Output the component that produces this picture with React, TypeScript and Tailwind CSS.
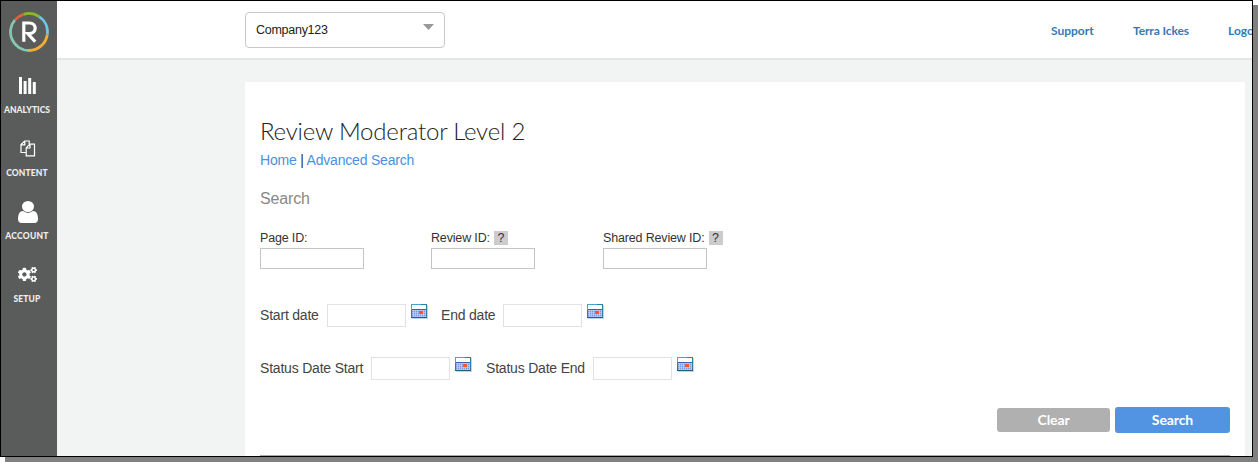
import type { ReactNode } from "react";
import { FaCogs } from "react-icons/fa";

function Logo() {
  return (
    <svg width="40" height="40" viewBox="0 0 40 40" fill="none" strokeWidth="2.8">
      <path d="M20 38.5A18.5 18.5 0 0 1 6 7.9" stroke="#86c7b0" />
      <path d="M6 7.9A18.5 18.5 0 0 1 14.6 2.3" stroke="#e2603b" />
      <path d="M14.6 2.3A18.5 18.5 0 0 1 30.2 4.6" stroke="#8cb82b" />
      <path d="M30.2 4.6A18.5 18.5 0 0 1 38.3 22.5" stroke="#72c5ea" />
      <path d="M38.3 22.5A18.5 18.5 0 0 1 20 38.5" stroke="#f0ae35" />
      <path d="M14.8 29.8V11H20.3C28.1 11 28.1 21.6 20.3 21.6H18.8L26.2 29.8" stroke="#fff" strokeWidth="3.2" />
    </svg>
  );
}

function BarsIcon() {
  return (
    <svg width="18" height="18" viewBox="0 0 18 18" fill="#fff">
      <path d="M1 0h3v17H1zM5.6 4h3v13h-3zM10.2 1h3v16h-3zM14.8 5h3v12h-3z" />
    </svg>
  );
}

function FilesIcon() {
  return (
    <svg className="-mt-[2px] ml-px" width="16" height="17" viewBox="0 0 16 17" fill="none" stroke="#fff" strokeWidth="1.2">
      <path d="M6 12.5H1V4.6L4.6 1H9.2V4.2M4.8 1V4.8H1" />
      <path d="M6.2 7.8 9.8 4.2H14.5V15.8H6.2ZM10 4.2V8H6.2" />
    </svg>
  );
}

function UserIcon() {
  return (
    <svg className="ml-px" width="20" height="22" viewBox="256 128 1280 1536" preserveAspectRatio="none" fill="#fff">
      <path d="M1536 1399q0 109-62.5 187t-150.5 78h-854q-88 0-150.5-78t-62.5-187q0-85 8.5-160.5t31.5-152 58.5-131 94-89 134.5-34.5q131 128 313 128t313-128q76 0 134.5 34.5t94 89 58.5 131 31.5 152 8.5 160.5zm-256-887q0 159-112.5 271.5t-271.5 112.5-271.5-112.5-112.5-271.5 112.5-271.5 271.5-112.5 271.5 112.5 112.5 271.5z" />
    </svg>
  );
}

function CalendarIcon() {
  return (
    <svg className="mb-[9px] ml-[5px] shrink-0" width="17" height="15" viewBox="0 0 17 15" shapeRendering="crispEdges">
      <path d="M1 1h16v14H1z" fill="#c3d3ea" />
      <path d="M0 0h16v14H0z" fill="#2f7da3" />
      <path d="M0 0h10v1H0zM0 1h1v5H0z" fill="#45a5d3" />
      <path d="M0 13h16v1H0z" fill="#1f607f" />
      <path d="M1 1h14v4H1z" fill="#fff" />
      <path d="M1 5h14v1H1z" fill="#3567ad" />
      <path d="M1 6h14v7H1z" fill="#7f97dc" />
      <path d="M1 6h14v1H1zM1 8h14v1H1zM1 10h14v1H1zM1 12h14v1H1z" fill="#a6b7e8" />
      <path d="M2 6h1v7H2zM4 6h1v7H4zM6 6h1v7H6zM8 6h1v7H8zM10 6h1v7h-1zM12 6h1v7h-1zM14 6h1v7h-1z" fill="#c8d3f4" fillOpacity=".7" />
      <path d="M8 7h4v3H8z" fill="#f2592f" />
    </svg>
  );
}

function NavItem({ icon, label, spacing }: { icon: ReactNode; label: string; spacing: string }) {
  return (
    <a className="flex h-[63px] w-[52px] flex-col items-center">
      <span className="flex h-6 items-center justify-center">{icon}</span>
      <span className={`mt-[7px] font-[Lato,sans-serif] text-[8.5px] leading-[11px] font-black whitespace-nowrap text-[#eee] ${spacing}`}>{label}</span>
    </a>
  );
}

function Help() {
  return <span className="ml-1 inline-block h-[14px] w-[14px] bg-[#ccc] text-center leading-[14px]">?</span>;
}

function IdField({ label, help, width }: { label: string; help?: boolean; width: string }) {
  return (
    <label className={`flex flex-col ${width}`}>
      <span className="flex h-[14px] items-center text-[12.5px] tracking-[-0.16px] whitespace-nowrap text-[#333]">
        {label}
        {help && <Help />}
      </span>
      <input className="mt-[3px] h-[21px] w-[104px] border border-[#c4c4c4] bg-white" />
    </label>
  );
}

function DateField({ label, width }: { label: string; width: string }) {
  return (
    <div className="flex h-[23px] items-center">
      <span className={`text-[14px] tracking-[-0.2px] whitespace-nowrap text-[#444] ${width}`}>{label}</span>
      <input className="h-[23px] w-[79px] border border-[#e2e2e2] bg-white" />
      <CalendarIcon />
    </div>
  );
}

export default function App() {
  return (
    <div className="h-[462px] w-[1258px] overflow-hidden bg-white font-['Liberation_Sans',Arial,sans-serif]">
      <div className="h-[457px] w-[1253px] border border-black shadow-[5px_5px_0_0_#808080]">
        <div className="flex h-full w-full overflow-hidden bg-[#f2f4f4]">
          <aside className="flex w-14 shrink-0 flex-col items-center bg-[#5a5c5b] pt-[11px]">
            <Logo />
            <nav className="mt-[22px] flex w-full flex-col">
              <NavItem icon={<BarsIcon />} label="ANALYTICS" spacing="tracking-[0.05px]" />
              <NavItem icon={<FilesIcon />} label="CONTENT" spacing="tracking-[0.15px]" />
              <NavItem icon={<UserIcon />} label="ACCOUNT" spacing="tracking-[0.25px]" />
              <NavItem icon={<FaCogs className="-mt-[2px] ml-px" size={19} color="#fff" />} label="SETUP" spacing="tracking-[0.1px]" />
            </nav>
          </aside>
          <div className="flex min-w-0 flex-1 flex-col">
            <header className="flex h-[59px] shrink-0 items-start border-b-2 border-[#e4e6e6] bg-white pt-[11px] pl-[188px]">
              <button className="flex h-9 w-[200px] shrink-0 items-center justify-between rounded border border-[#c8c8c8] pr-[10px] pl-[10px] text-[12.5px] tracking-[-0.27px] text-[#222]">
                <span>Company123</span>
                <svg className="-mt-[6px]" width="11" height="6" viewBox="0 0 11 6"><path d="M0 0h11L5.5 6z" fill="#999" /></svg>
              </button>
              <div className="ml-[606px] flex shrink-0 pt-[11px] font-[Lato,sans-serif] text-[12px] leading-[16px] font-bold whitespace-nowrap text-[#337ab7]">
                <a className="w-[82px] shrink-0">Support</a>
                <a className="w-[95px] shrink-0 tracking-[-0.1px]">Terra Ickes</a>
                <a className="shrink-0">Logout</a>
              </div>
            </header>
            <main className="mt-[22px] ml-[188px] flex w-[1000px] flex-1 flex-col bg-white px-[15px]">
              <h1 className="mt-[33px] font-[Lato,sans-serif] text-[24px] leading-[32px] font-light tracking-[-0.2px] text-[#222]">Review Moderator Level 2</h1>
              <div className="mt-[5px] text-[14px] leading-4 tracking-[-0.2px] text-[#333]">
                <a className="text-[#4a90e2]">Home</a> | <a className="text-[#4a90e2]">Advanced Search</a>
              </div>
              <h2 className="mt-[21px] text-[16px] leading-5 tracking-[-0.15px] text-[#888]">Search</h2>
              <div className="mt-[22px] flex">
                <IdField label="Page ID:" width="w-[171px]" />
                <IdField label="Review ID:" help width="w-[172px]" />
                <IdField label="Shared Review ID:" help width="w-[172px]" />
              </div>
              <div className="mt-[35px] flex gap-[13px]">
                <DateField label="Start date" width="w-[67px]" />
                <DateField label="End date" width="w-[62px]" />
              </div>
              <div className="mt-[30px] flex gap-[14px]">
                <DateField label="Status Date Start" width="w-[111px]" />
                <DateField label="Status Date End" width="w-[107px]" />
              </div>
              <div className="mt-[27px] flex items-center justify-end gap-[5px] font-[Lato,sans-serif] text-[14px] font-bold text-white">
                <button className="h-6 w-[113px] rounded-[3px] bg-[#b0b0b0] pb-px leading-[22px] tracking-[-0.1px]">Clear</button>
                <button className="h-[26px] w-[115px] rounded-[3px] bg-[#5294e2] pb-px leading-[24px] tracking-[-0.1px]">Search</button>
              </div>
              <hr className="mt-[22px] border-t border-[#aaa]" />
            </main>
          </div>
        </div>
      </div>
    </div>
  );
}
